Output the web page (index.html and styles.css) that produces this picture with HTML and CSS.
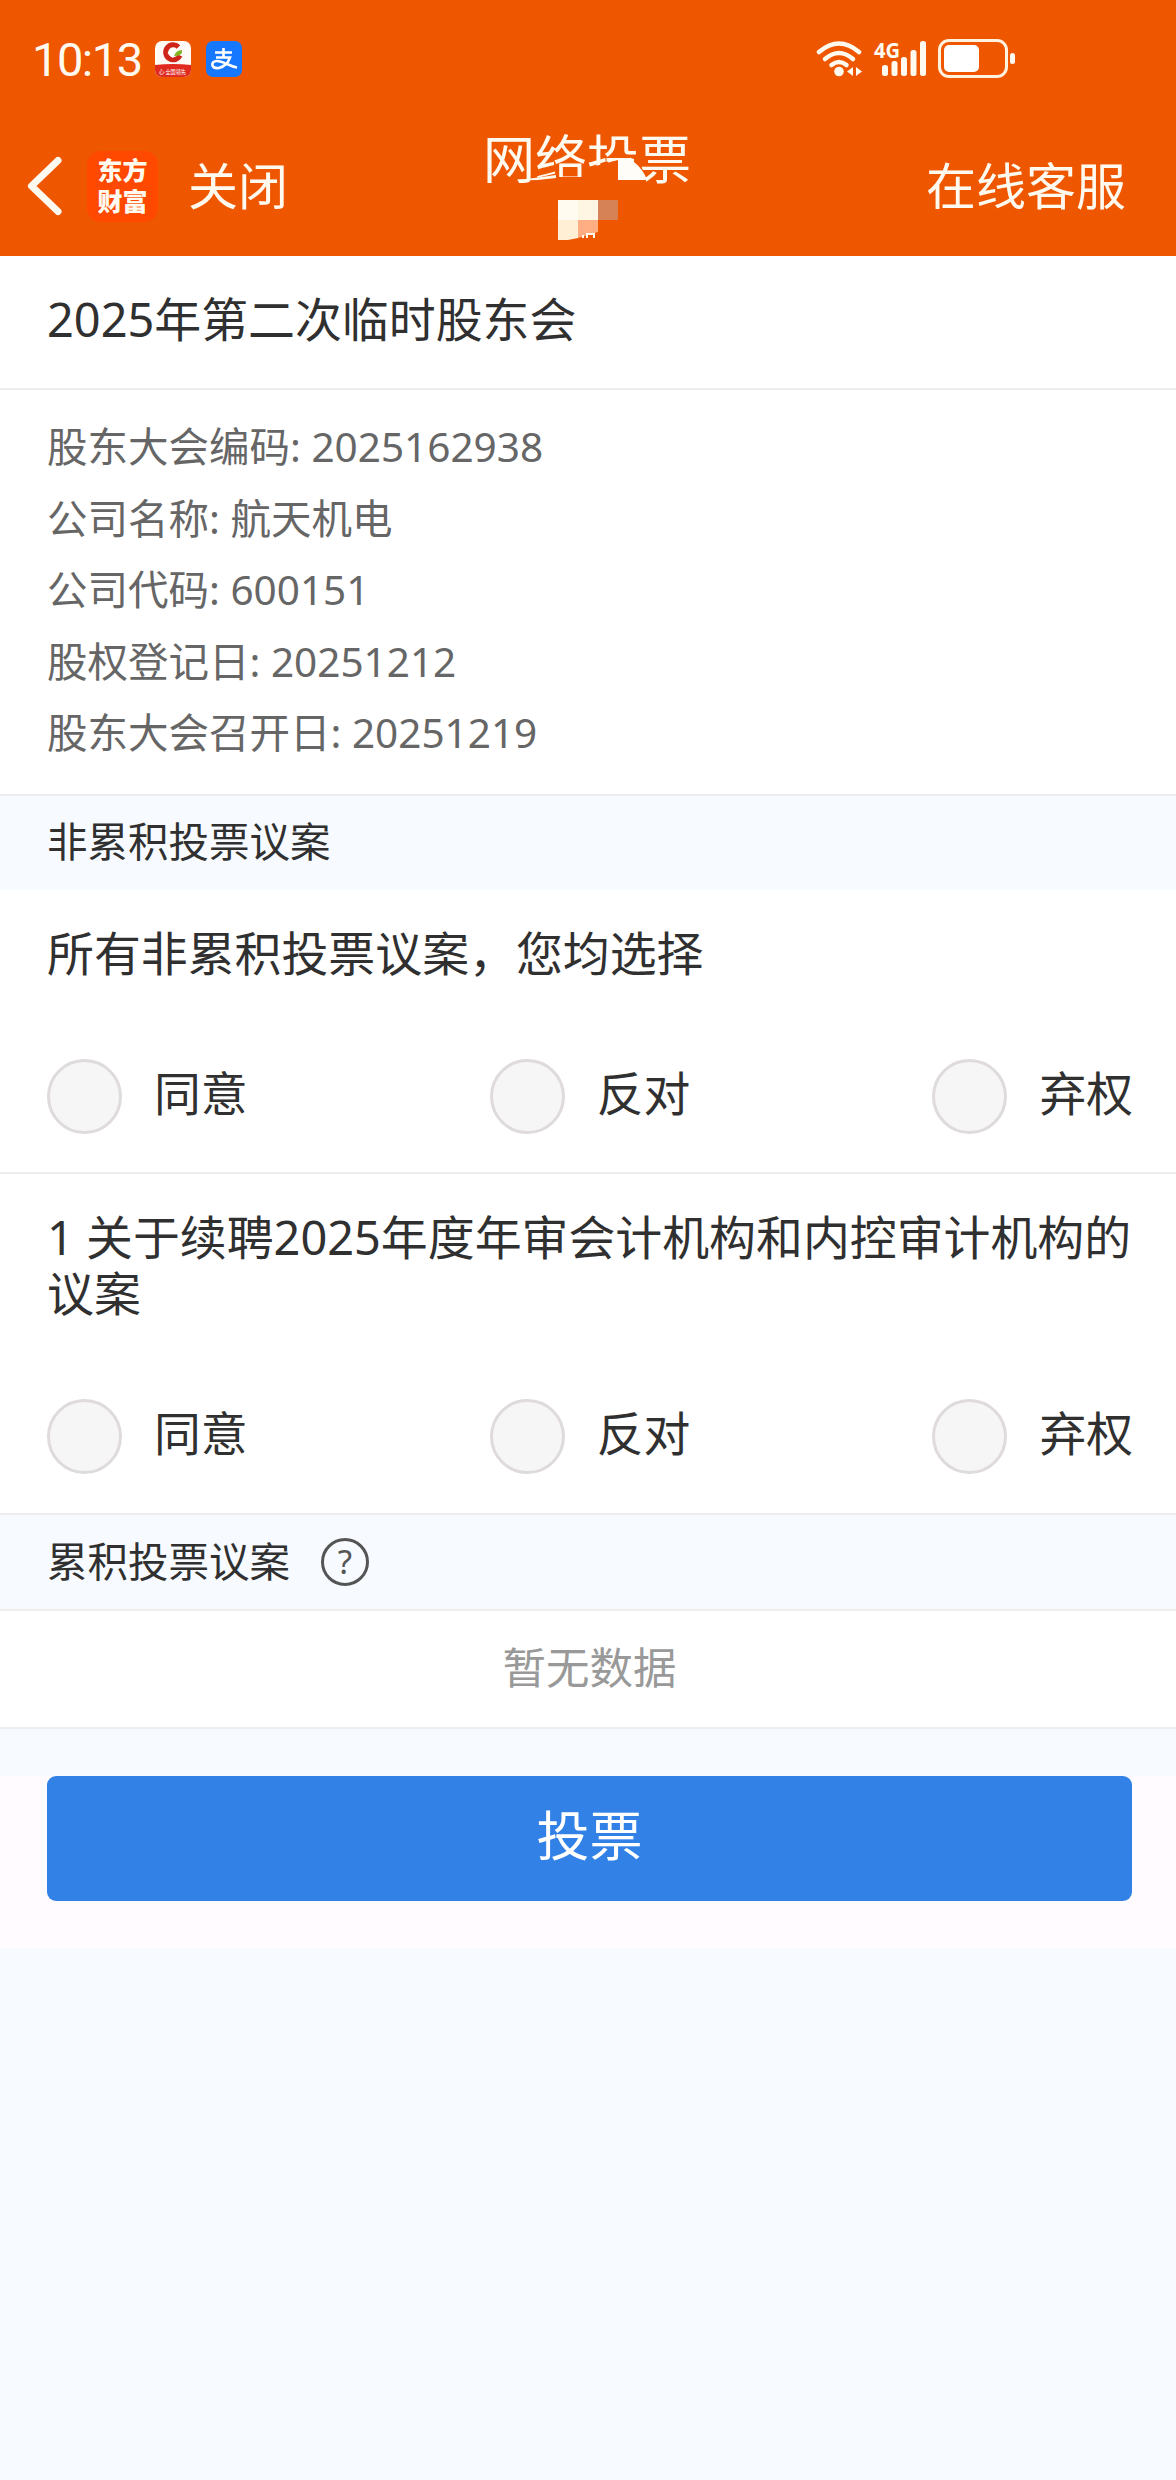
FILE: index.html
```html
<!DOCTYPE html>
<html lang="zh-CN">
<head>
<meta charset="UTF-8">
<meta name="viewport" content="width=device-width, initial-scale=1.0">
<title>网络投票</title>
<link rel="stylesheet" href="styles.css">
</head>
<body>

<header>
  <div class="status-bar">
    <span class="time">10:13</span>
    <svg class="app-icon" viewBox="0 0 36 36">
      <rect width="36" height="36" rx="7" fill="#fffaf5"/>
      <path d="M0 24Q18 22 36 24V29a7 7 0 0 1-7 7H7a7 7 0 0 1-7-7Z" fill="#e02a20"/>
      <path d="M23.500 6A7.500 7.500 0 1 0 25 14.500" fill="none" stroke="#cf2419" stroke-width="5"/>
      <path d="M17.500 7l5 5-5 5-5-5Z" fill="#fff"/>
      <path d="M19 15q2-6 8-6 1 6-8 6Z" fill="#7fb520"/>
      <text x="4" y="33" font-size="6" fill="#fff" textLength="27" lengthAdjust="spacingAndGlyphs">心·全国领先</text>
    </svg>
    <svg class="app-icon pay" viewBox="0 0 36 36">
      <rect width="36" height="36" rx="7" fill="#1677ff"/>
      <path d="M9 11.500H26M17.500 7V16M10 16.500H24Q21 25 13 27C5 28 4 20 11 20C17 20 23 25 31 26.500" fill="none" stroke="#fff" stroke-width="2.600"/>
    </svg>
    <div class="signals">
      <svg class="wifi" viewBox="0 0 48 38">
        <g fill="none" stroke="#fffaf0" stroke-width="4.500" stroke-linecap="round">
          <path d="M3 12Q23 -5 43 12"/>
          <path d="M9 19Q23 7 37 19"/>
          <path d="M15.500 25Q23 19 30.500 25"/>
        </g>
        <circle cx="23" cy="31.500" r="4.800" fill="#fffaf0"/>
        <path d="M37 27v9l-6-4.500ZM40 27v9l6-4.500Z" fill="#fffaf0"/>
      </svg>
      <svg class="mobile" viewBox="0 0 54 38">
        <text x="0" y="18" font-size="22" font-weight="700" fill="#fffaf0" textLength="26" lengthAdjust="spacingAndGlyphs">4G</text>
        <g fill="#fffaf0">
          <rect x="8" y="25" width="6" height="11" rx="2.500"/>
          <rect x="17.500" y="21" width="6" height="15" rx="2.500"/>
          <rect x="27" y="17" width="6" height="19" rx="2.500"/>
          <rect x="36.500" y="10" width="6" height="26" rx="2.500"/>
          <rect x="46" y="1" width="6" height="35" rx="2.500"/>
        </g>
      </svg>
      <svg class="battery" viewBox="0 0 78 40">
        <rect x="1.500" y="1.500" width="67" height="36" rx="9.500" fill="none" stroke="#fff3e0" stroke-width="3"/>
        <rect x="6" y="6" width="35" height="27" rx="5" fill="#fff"/>
        <rect x="72" y="14" width="5" height="11" rx="2.500" fill="#fffaf0"/>
      </svg>
    </div>
  </div>

  <nav>
    <svg class="back" viewBox="0 0 36 60">
      <path d="M31 4.500L4.500 30L31 55.500" fill="none" stroke="#fffaf0" stroke-width="7" stroke-linecap="round" stroke-linejoin="round"/>
    </svg>
    <div class="brand">东方<br>财富</div>
    <a class="close">关闭</a>
    <div class="page-title">
      网络投票
      <!-- masked account name -->
      <svg class="mosaic" viewBox="0 0 220 120">
        <path d="M52 49L78 43V47H108V62H52Z" fill="#ee5700"/>
        <path d="M108 38L138 30H156Q164 38 166 50V62H108Z" fill="#ee5700"/>
        <path d="M36 50.500L76 45V48L58 50Z" fill="#fffaf0"/>
        <path d="M138 29H154V32Q163 39 167 50H138Z" fill="#fffdf8"/>
        <path d="M78 70h20v20h-20Z" fill="#fffbf0"/>
        <path d="M98 70h20v20h-20Z" fill="#fff5e3"/>
        <path d="M118 70h20v20h-20Z" fill="#d68256"/>
        <path d="M78 90h20v18l-10 2h-10Z" fill="#fff0d5"/>
        <path d="M98 90h20v12l-20 6Z" fill="#ffae84"/>
        <path d="M103 108v-3M107 108v-4h7v4" fill="none" stroke="#fffaf0" stroke-width="2"/>
      </svg>
    </div>
    <a class="service">在线客服</a>
  </nav>
</header>

<main>
  <h1>2025年第二次临时股东会</h1>

  <ul class="info">
    <li>股东大会编码: 2025162938</li>
    <li>公司名称: 航天机电</li>
    <li>公司代码: 600151</li>
    <li>股权登记日: 20251212</li>
    <li>股东大会召开日: 20251219</li>
  </ul>

  <h2>非累积投票议案</h2>

  <section class="proposal">
    <p>所有非累积投票议案，您均选择</p>
    <div class="options">
      <label><i class="radio"></i><span>同意</span></label>
      <label><i class="radio"></i><span>反对</span></label>
      <label><i class="radio"></i><span>弃权</span></label>
    </div>
  </section>

  <section class="proposal">
    <p>1 关于续聘2025年度年审会计机构和内控审计机构的议案</p>
    <div class="options">
      <label><i class="radio"></i><span>同意</span></label>
      <label><i class="radio"></i><span>反对</span></label>
      <label><i class="radio"></i><span>弃权</span></label>
    </div>
  </section>

  <h2 class="cumulative">累积投票议案 <span class="help">?</span></h2>
  <div class="empty">暂无数据</div>

  <div class="submit">
    <button type="button">投票</button>
  </div>
</main>

</body>
</html>
```

FILE: styles.css
```css
* { box-sizing: border-box; }
body {
  margin: 0;
  background: #f7fbff;
  color: #303030;
  font-family: "Noto Sans", "Noto Sans CJK SC", sans-serif;
}

/* Header */
header { height: 256px; background: #ee5700; color: #fffaf0; }
.status-bar { display: flex; align-items: center; height: 118px; padding-left: 32px; }
.time { width: 123px; font: 400 47px/1 Roboto, sans-serif; letter-spacing: -1.5px; }
.app-icon { width: 36px; height: 36px; margin-top: -1px; }
.pay { margin-left: 15px; }
.signals { display: flex; align-items: center; margin-left: 574px; }
.wifi { width: 48px; height: 38px; }
.mobile { width: 54px; height: 38px; margin-left: 10px; overflow: visible; }
.battery { width: 78px; height: 40px; margin-left: 10px; }

nav {
  position: relative;
  display: flex;
  align-items: center;
  height: 136px;
  padding: 0 50px 0 27px;
  font-size: 50px;
}
.back { width: 36px; height: 60px; }
.brand {
  width: 71px;
  height: 71px;
  margin-left: 24px;
  padding-top: 3px;
  border-radius: 14px;
  background: #ff4800;
  font: 900 25px/31px "Noto Sans CJK SC", sans-serif;
  text-align: center;
}
.close { margin-left: 30px; padding-bottom: 6px; }
.service { margin-left: auto; padding-bottom: 6px; }
.page-title {
  position: absolute;
  left: 480px;
  top: 12px;
  width: 220px;
  height: 120px;
  padding-left: 3px;
  font-size: 52px;
  line-height: 57px;
  white-space: nowrap;
}
.mosaic { position: absolute; left: 0; top: 0; width: 220px; height: 120px; }

/* Meeting info */
h1 {
  height: 134px;
  margin: 0;
  padding: 31px 47px;
  border-bottom: 2px solid #ededee;
  background: #fff;
  font-size: 46.9px;
  font-weight: 400;
  line-height: 64px;
}
.info {
  height: 406px;
  margin: 0;
  padding: 21px 47px 0;
  border-bottom: 2px solid #ededee;
  background: #fff;
  color: #666;
  font-size: 40.5px;
  line-height: 71.6px;
  list-style: none;
}

h2 {
  display: flex;
  align-items: center;
  height: 94px;
  margin: 0;
  padding: 0 47px 8px;
  font-size: 40.5px;
  font-weight: 400;
}

/* Proposals */
.proposal {
  padding: 35px 43px 38px 47px;
  border-bottom: 2px solid #ededee;
  background: #fff;
}
.proposal p { margin: 0; font-size: 46.9px; line-height: 56px; }
.proposal + .proposal { padding-bottom: 39px; }
.options { display: flex; justify-content: space-between; margin-top: 78px; }
.options label { display: flex; height: 75px; font-size: 46.8px; line-height: 69px; }
.radio {
  width: 75px;
  height: 75px;
  margin-right: 32px;
  border: 3px solid #dedadd;
  border-radius: 50%;
  background: #f6f6f6;
}

.cumulative { height: 96px; padding-bottom: 6px; border-bottom: 2px solid #ededee; }
.help {
  width: 48px;
  height: 48px;
  margin: 5px 0 0 31px;
  border: 3px solid #555;
  border-radius: 50%;
  color: #555;
  font-size: 33px;
  line-height: 42px;
  text-align: center;
}
.empty {
  height: 118px;
  padding-left: 3px;
  border-bottom: 2px solid #ededee;
  background: #fff;
  color: #999;
  font-size: 43.5px;
  line-height: 113px;
  text-align: center;
}

/* Submit */
.submit { height: 172px; margin-top: 47px; padding: 0 44px 0 47px; background: #fffbff; }
.submit button {
  display: block;
  width: 100%;
  height: 125px;
  padding: 0 0 6px;
  border: 0;
  border-radius: 9px;
  background: #3181e6;
  color: #fff;
  font: 53px/119px "Noto Sans", "Noto Sans CJK SC", sans-serif;
}
```
